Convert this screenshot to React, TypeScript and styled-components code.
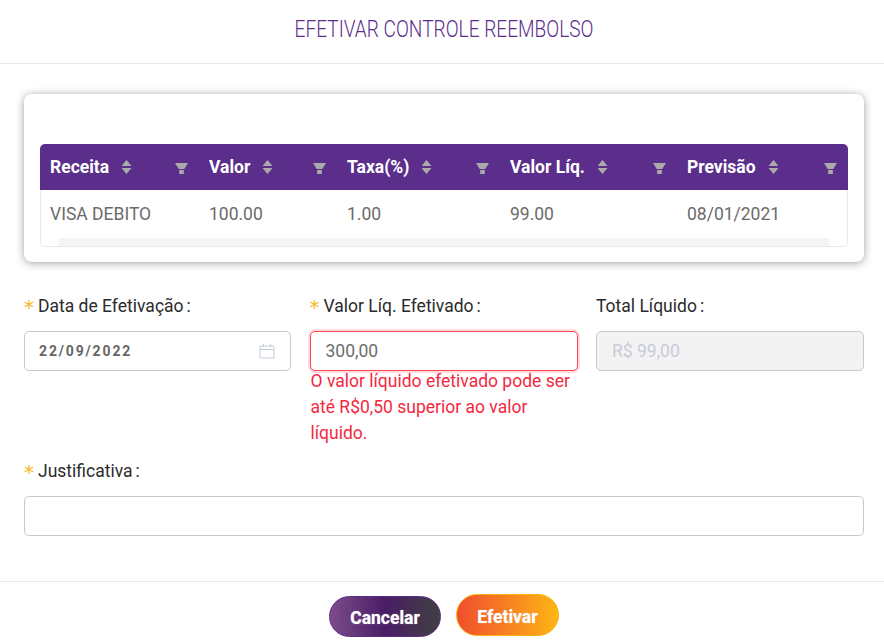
import React from "react";
import styled, { createGlobalStyle } from "styled-components";

const Global = createGlobalStyle`
  html, body { margin: 0; padding: 0; background: #fff; }
  body { font-family: Roboto, "Liberation Sans", sans-serif; width: 884px; height: 640px; overflow: hidden; }
`;
const Page = styled.div`width: 884px; height: 640px; display: flex; flex-direction: column;`;
const Header = styled.header`
  height: 63px; border-bottom: 1px solid #e8e8e8; display: flex; align-items: center; justify-content: center;
`;
const Title = styled.h1`
  margin: 0 0 4px 4px; font-weight: 300; font-size: 23px; line-height: 28px; color: #5b2e8c; white-space: nowrap;
  transform: scaleX(0.83); transform-origin: center;
`;
const Body = styled.main`flex: 1; padding: 30px 20px 0 24px;`;
const Card = styled.section`
  height: 168px; box-sizing: border-box; padding: 50px 16px 0; background: #fff; border-radius: 8px;
  box-shadow: 0 1px 8px rgba(0,0,0,.38);
`;
const TableBox = styled.div`
  height: 103px; box-sizing: border-box; border: 1px solid #e8e8e8; border-top: 0; border-radius: 5px;
`;
const Cols = "159px 138px 163px 177px 1fr";
const HeadRow = styled.div`
  display: grid; grid-template-columns: ${Cols}; height: 46px; margin: 0 -1px; background: #5b2e8c; border-radius: 5px 5px 0 0;
`;
const HeadCell = styled.div`
  display: flex; align-items: center; padding: 0 11px 0 10px; color: #fff; font-weight: 700; font-size: 17.5px;
`;
const Sort = styled.svg`width: 11px; height: 16px; margin-left: 12px; flex: none;`;
const Funnel = styled.svg`width: 13px; height: 13px; margin-left: auto; flex: none; position: relative; top: 1px;`;
const DataRow = styled.div`
  display: grid; grid-template-columns: ${Cols}; height: 48px; margin: 0 -1px; align-items: center; color: #6b6b6b; font-size: 17.5px;
`;
const DataCell = styled.div`padding: 0 0 0 10px;`;
const Scroll = styled.div`height: 8px; margin: 0 17px; background: #f5f5f5;`;
const Form = styled.form`
  display: grid; grid-template-columns: 267px 268px 268px; column-gap: 18.5px; margin-top: 32px; width: 840px;
`;
const Field = styled.div`display: flex; flex-direction: column; min-width: 0;`;
const Label = styled.label`
  display: flex; align-items: center; height: 22px; box-sizing: border-box; padding-top: 2px; font-size: 17.5px; color: #2b2b2b;
  margin-bottom: 15px; white-space: nowrap;
`;
const Star = styled.span`
  color: #f7b519; font-size: 20px; width: 14px; flex: none; font-family: "DejaVu Sans", sans-serif; position: relative; top: 1px;
`;
const Colon = styled.span`margin-left: 3px;`;
const InputBox = styled.div<{ $error?: boolean; $disabled?: boolean }>`
  height: 40px; box-sizing: border-box; display: flex; align-items: center; padding: 0 15px; border-radius: 5px;
  border: 1px solid ${p => p.$error ? "#ff4455" : "#c8c8c8"};
  background: ${p => p.$disabled ? "#f3f3f3" : "#fff"};
  box-shadow: ${p => p.$error ? "0 0 0 2px rgba(255,68,85,.2)" : "none"};
  font-size: 17.5px; color: ${p => p.$disabled ? "#c8ccd8" : "#6e6e6e"};
`;
const DateText = styled.span`font-weight: 700; font-size: 14px; letter-spacing: 1.85px; color: #666; margin-left: -1px;`;
const CalIcon = styled.svg`width: 16px; height: 16px; margin-left: auto; flex: none;`;
const ErrorText = styled.div`font-size: 17.5px; line-height: 26px; color: #f5283f; margin-top: -3px; padding-left: 1px; height: 82px;`;
const FullField = styled(Field)`margin-top: 9px; width: 840px;`;
const Footer = styled.footer`
  height: 59px; box-sizing: border-box; border-top: 1px solid #e8e8e8; display: flex; justify-content: center; gap: 15px;
  align-items: flex-start; padding: 12px 0 0 4px;
`;
const Pill = styled.button<{ $primary?: boolean }>`
  border-radius: 21px; color: #fff; font-family: Roboto, sans-serif; font-weight: 700; font-size: 17.5px;
  padding: ${p => p.$primary ? "4px 0 0" : "2px 0 0"};
  height: ${p => p.$primary ? "42px" : "41px"};
  width: ${p => p.$primary ? "103px" : "112px"};
  margin-top: ${p => p.$primary ? "0" : "2px"};
  border: 1px solid ${p => p.$primary ? "#fbb20f" : "#5b2e8c"};
  background: ${p => p.$primary ? "linear-gradient(90deg,#f04e2d,#fdb515)" : "linear-gradient(90deg,#7c4c8a,#4a1d66 50%,#404040)"};
  text-shadow: 0 0 1px rgba(255,255,255,.7);
`;

const SortIcon = () => (
  <Sort viewBox="0 0 11 16" aria-hidden="true">
    <path d="M5.5 1 L10.5 7 H.5Z M.5 9 H10.5 L5.5 15Z" fill="#aaa" />
  </Sort>
);
const FunnelIcon = () => (
  <Funnel viewBox="0 0 14 14" aria-hidden="true">
    <path d="M0 1H14L10 7.5H4Z M4.5 8.5H9.5V13H4.5Z" fill="#aaa" />
  </Funnel>
);

const heads = ["Receita", "Valor", "Taxa(%)", "Valor Líq.", "Previsão"];
const cells = ["VISA DEBITO", "100.00", "1.00", "99.00", "08/01/2021"];

export default function App() {
  return (
    <Page>
      <Global />
      <Header><Title>EFETIVAR CONTROLE REEMBOLSO</Title></Header>
      <Body>
        <Card>
          <TableBox>
            <HeadRow>
              {heads.map(h => (
                <HeadCell key={h}><span>{h}</span><SortIcon /><FunnelIcon /></HeadCell>
              ))}
            </HeadRow>
            <DataRow>{cells.map(c => <DataCell key={c}>{c}</DataCell>)}</DataRow>
            <Scroll />
          </TableBox>
        </Card>
        <Form>
          <Field>
            <Label><Star>*</Star>Data de Efetivação<Colon>:</Colon></Label>
            <InputBox>
              <DateText>22/09/2022</DateText>
              <CalIcon viewBox="0 0 16 16" aria-hidden="true">
                <path d="M1 3H15V15H1Z M1 6.5H15 M4.5 1V4 M11.5 1V4" fill="none" stroke="#c5cbdb" strokeWidth="1" />
              </CalIcon>
            </InputBox>
          </Field>
          <Field>
            <Label><Star>*</Star>Valor Líq. Efetivado<Colon>:</Colon></Label>
            <InputBox $error>300,00</InputBox>
            <ErrorText>O valor líquido efetivado pode ser até R$0,50 superior ao valor líquido.</ErrorText>
          </Field>
          <Field>
            <Label>Total Líquido<Colon>:</Colon></Label>
            <InputBox $disabled>R$ 99,00</InputBox>
          </Field>
        </Form>
        <FullField>
          <Label><Star>*</Star>Justificativa<Colon>:</Colon></Label>
          <InputBox />
        </FullField>
      </Body>
      <Footer>
        <Pill type="button">Cancelar</Pill>
        <Pill type="button" $primary>Efetivar</Pill>
      </Footer>
    </Page>
  );
}
